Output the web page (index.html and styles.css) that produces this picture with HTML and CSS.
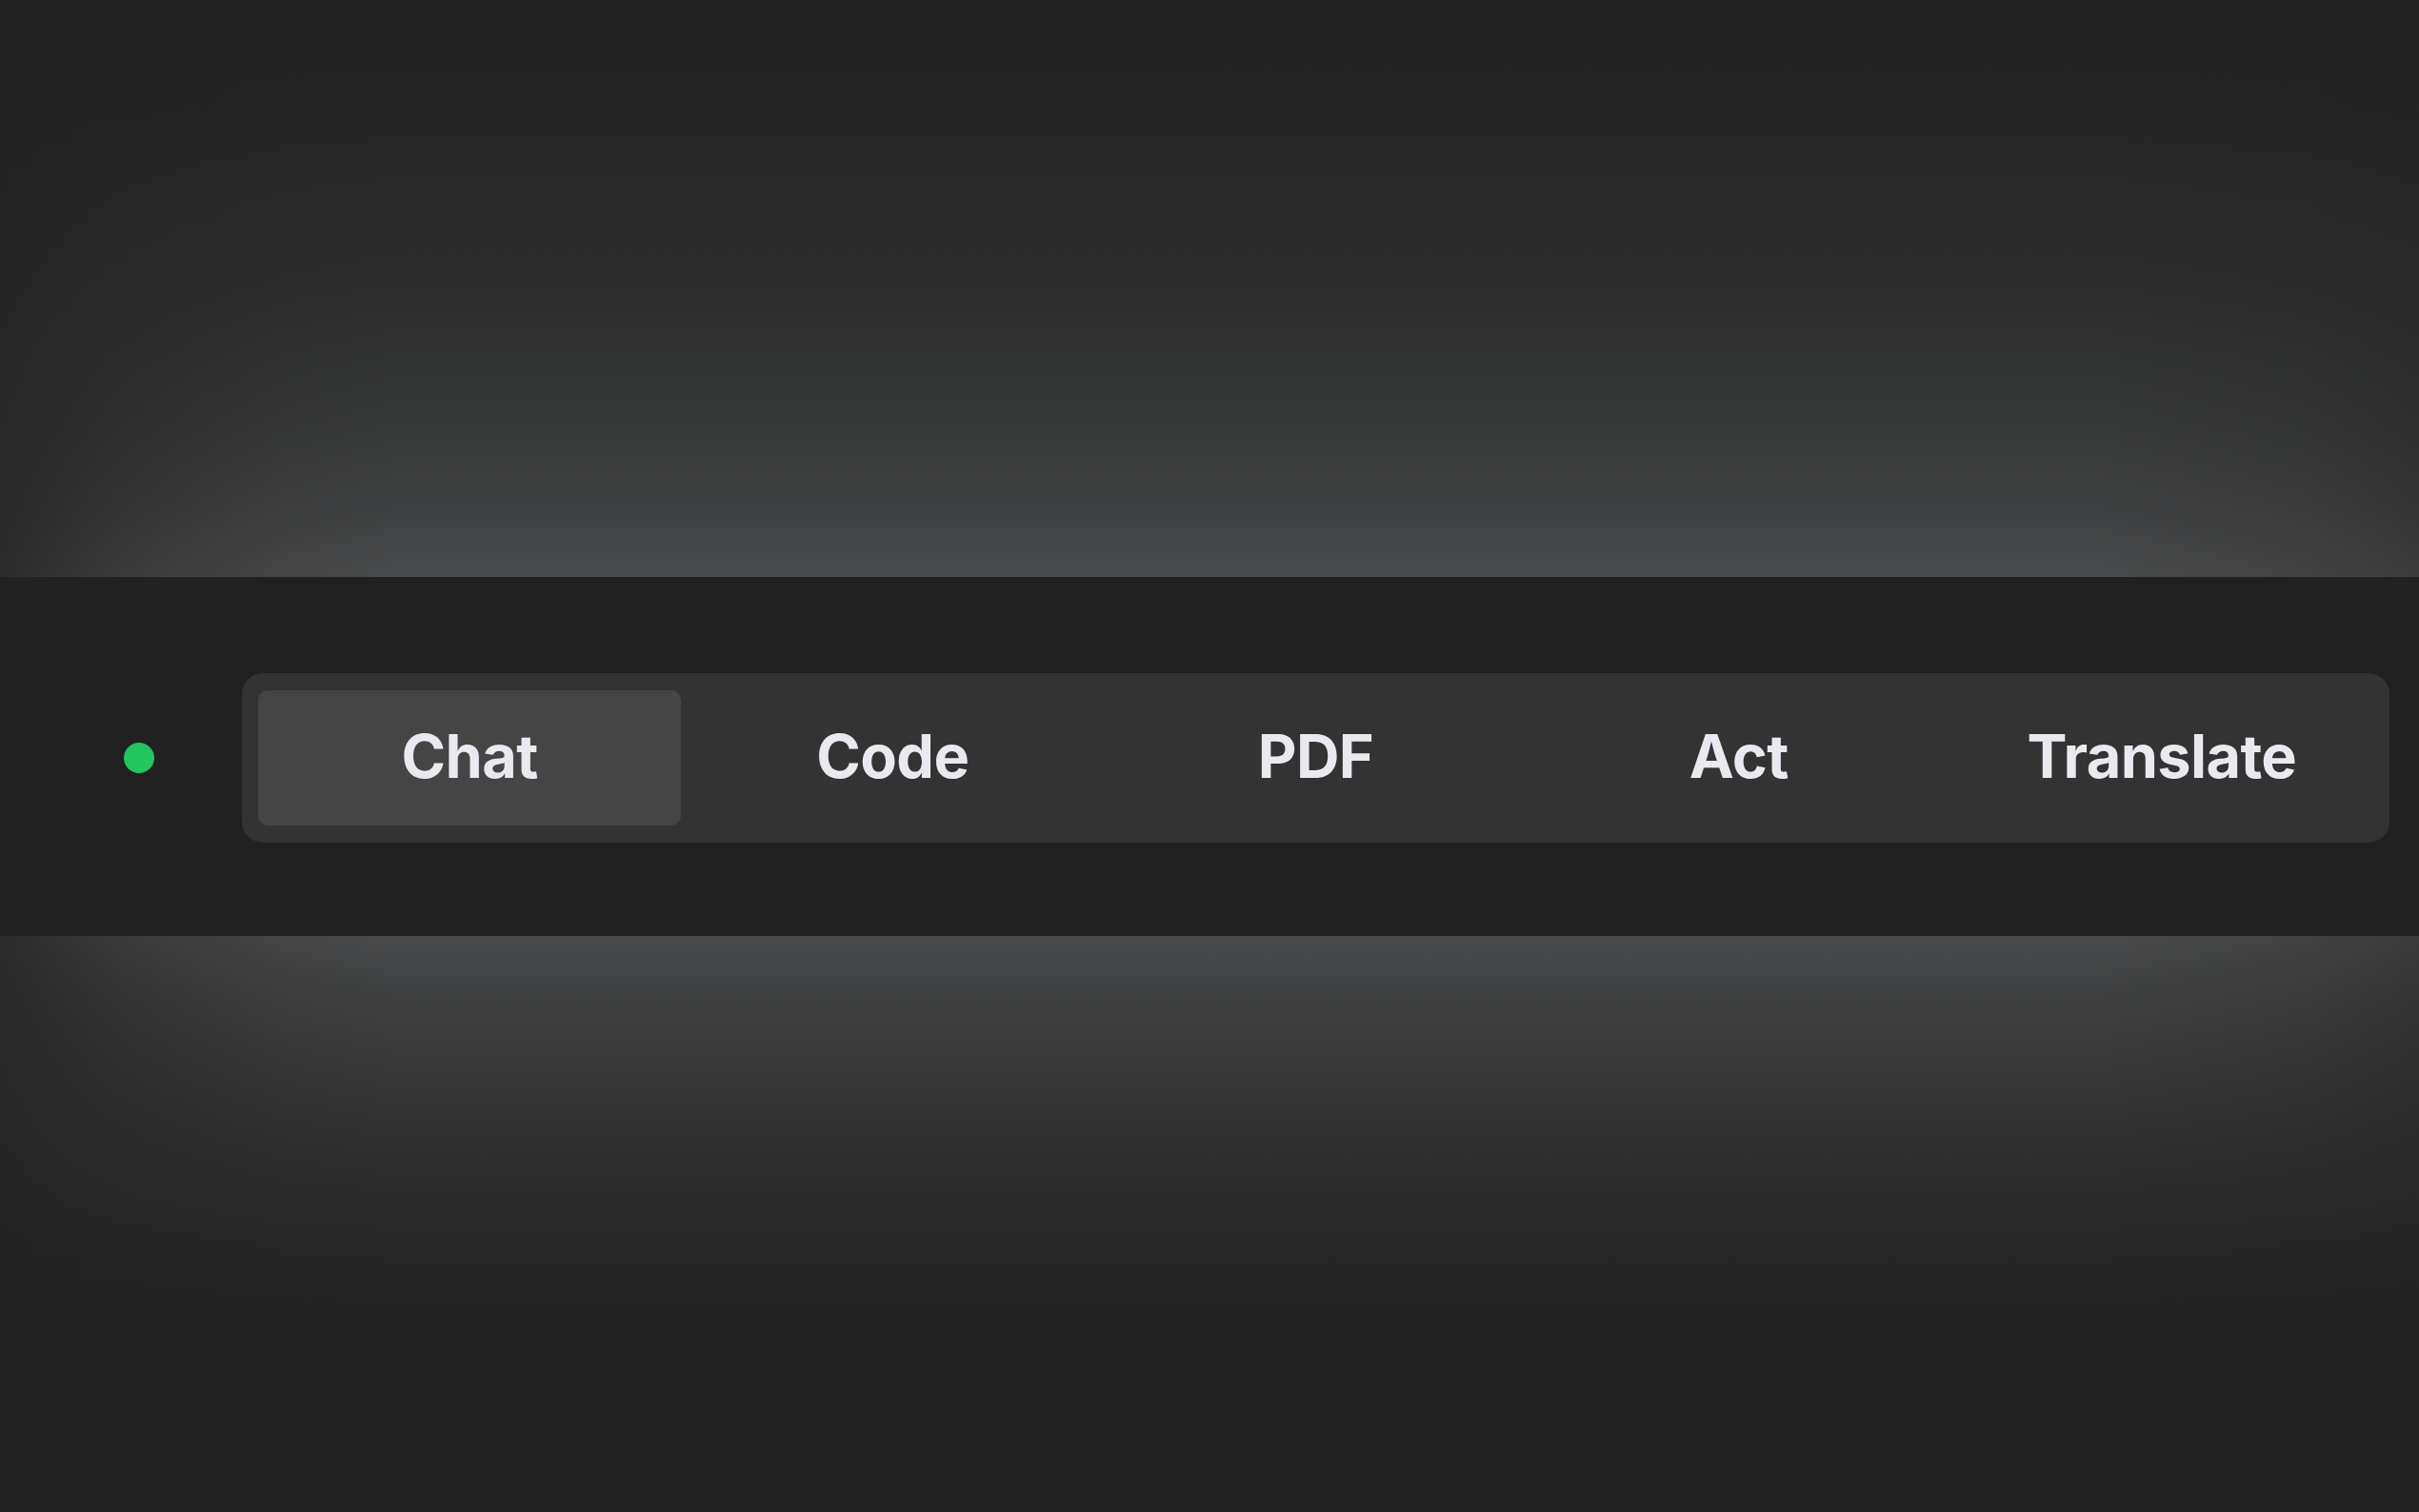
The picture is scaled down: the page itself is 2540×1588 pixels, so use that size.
FILE: index.html
```html
<!DOCTYPE html>
<html lang="en">
<head>
<meta charset="utf-8">
<title>Mode switcher</title>
<link rel="stylesheet" href="styles.css">
</head>
<body>
  <main class="page">
    <section class="bar">
      <span class="status-dot" aria-label="online"></span>
      <nav class="tabs">
        <button class="tab active">Chat</button>
        <button class="tab">Code</button>
        <button class="tab">PDF</button>
        <button class="tab">Act</button>
        <button class="tab">Translate</button>
      </nav>
    </section>
  </main>
</body>
</html>
```

FILE: styles.css
```css
html, body {
  margin: 0;
  padding: 0;
  height: 100%;
}

body {
  font-family: Inter, "Noto Sans", "Liberation Sans", sans-serif;
  background-color: #232323;
  background-image:
    linear-gradient(to right,
      rgba(35,35,35,0.78) 0px,
      rgba(35,35,35,0.45) 120px,
      rgba(35,35,35,0.12) 300px,
      rgba(35,35,35,0) 420px,
      rgba(35,35,35,0) 2200px,
      rgba(35,35,35,0.2) 2420px,
      rgba(35,35,35,0.42) 2540px),
    linear-gradient(to bottom,
      #232323 0px,
      #252525 120px,
      #2a2a2a 240px,
      #2d2d2d 300px,
      #323333 380px,
      #373838 450px,
      #3f4041 530px,
      #4a4b4c 605px,
      #4a4b4c 982px,
      #404142 1040px,
      #3a3a3a 1100px,
      #303030 1200px,
      #272727 1300px,
      #232323 1400px,
      #232323 1588px);
  background-repeat: no-repeat;
  background-size: 100% 1588px;
}

.page {
  min-height: 100%;
  display: flex;
  flex-direction: column;
  justify-content: center;
}

.bar {
  height: 377px;
  box-sizing: border-box;
  background: #212121;
  display: flex;
  align-items: center;
  padding: 4px 31px 0 130px;
  gap: 92px;
}

.status-dot {
  flex: none;
  width: 32px;
  height: 32px;
  border-radius: 50%;
  background: #22c55e;
}

.tabs {
  flex: 1;
  display: flex;
  padding: 18px 17px;
  background: #333333;
  border-radius: 22px;
}

.tab {
  flex: 1;
  height: 142px;
  padding: 0 0 4px;
  border: none;
  border-radius: 11px;
  background: transparent;
  color: #e8eaef;
  font-family: Inter, "Noto Sans", "Liberation Sans", sans-serif;
  font-weight: 700;
  font-size: 63px;
  letter-spacing: -0.6px;
  display: flex;
  align-items: center;
  justify-content: center;
  cursor: pointer;
}

.tab.active {
  background: #454545;
}
```
